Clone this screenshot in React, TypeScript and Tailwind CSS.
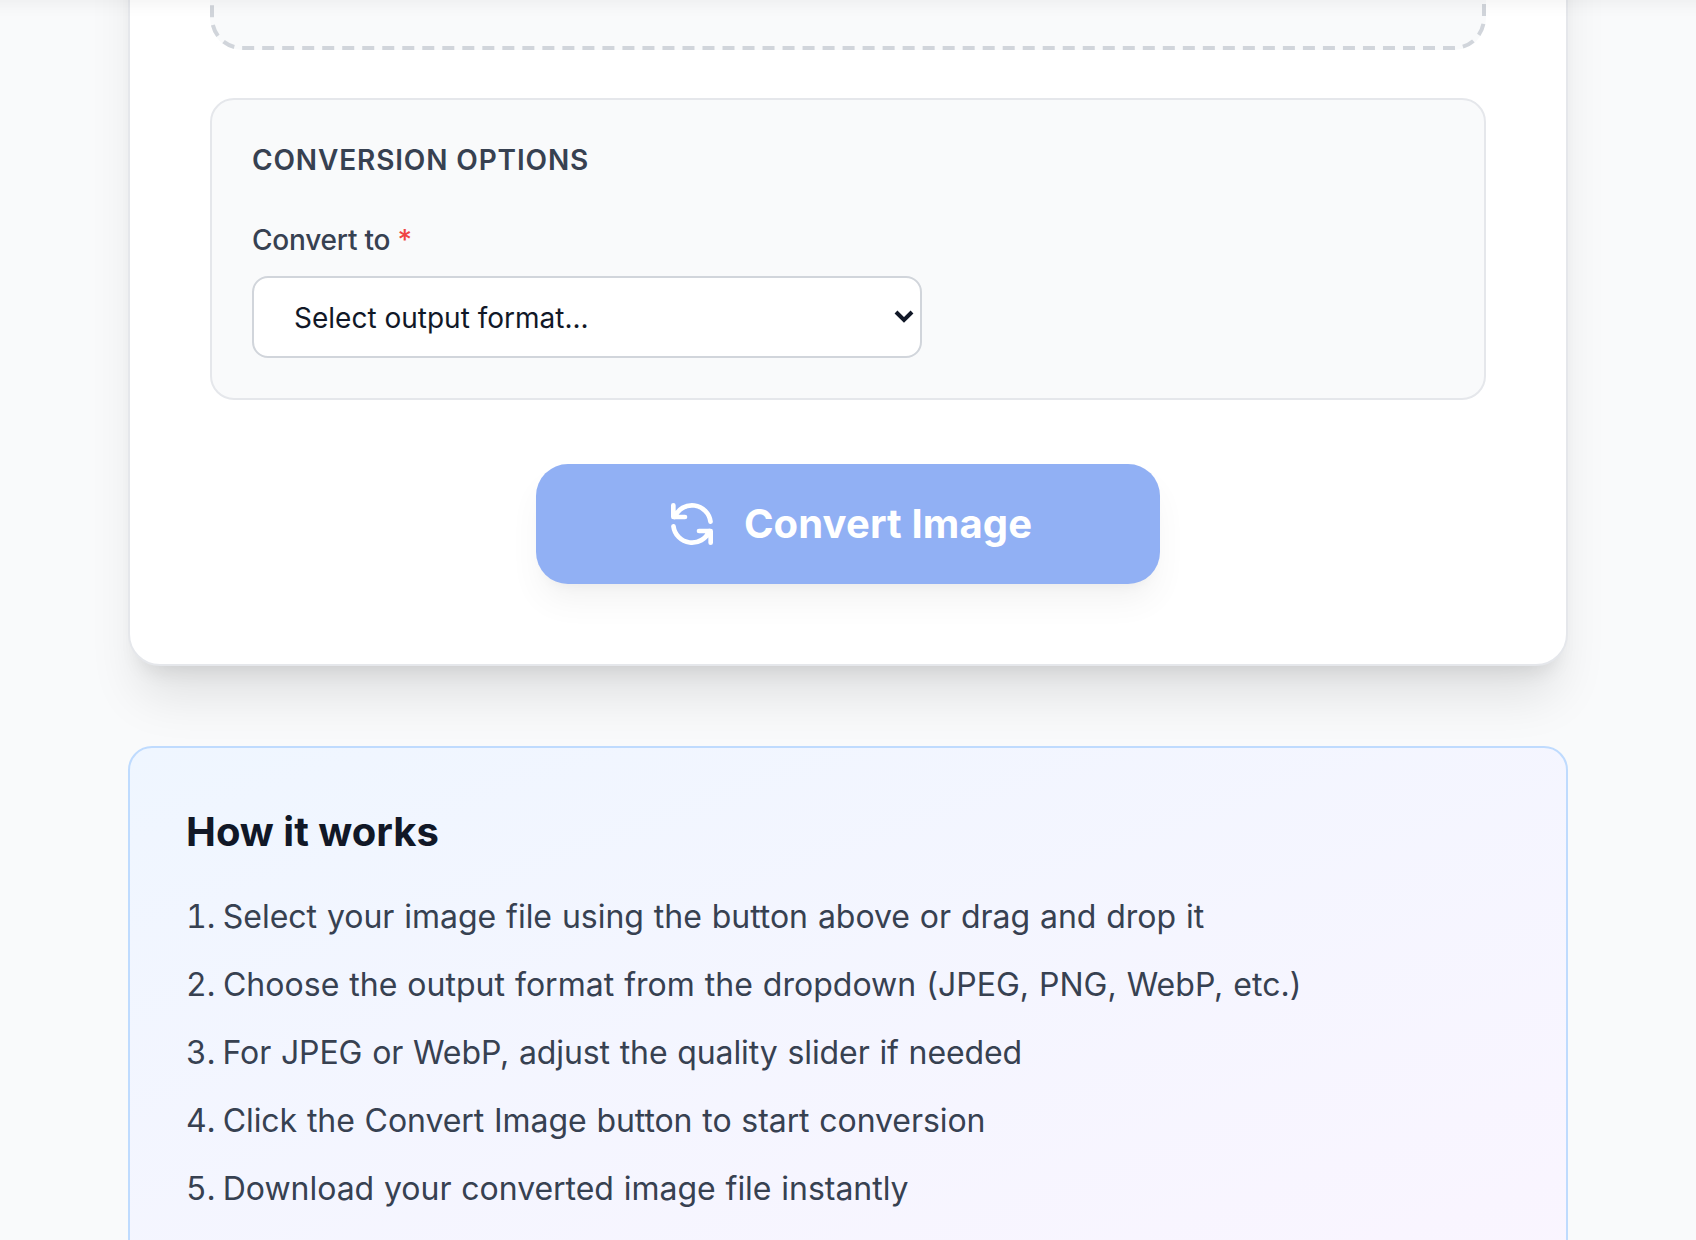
const steps = [
  {
    text: "Select your image file using the button above or drag and drop it",
    className: "tracking-[-0.009px]",
  },
  {
    text: "Choose the output format from the dropdown (JPEG, PNG, WebP, etc.)",
    className: "tracking-[0.014px]",
  },
  {
    text: "For JPEG or WebP, adjust the quality slider if needed",
    className: "tracking-[-0.048px]",
  },
  {
    text: "Click the Convert Image button to start conversion",
    className: "tracking-[-0.032px]",
  },
  {
    text: "Download your converted image file instantly",
    className: "tracking-[-0.014px]",
  },
];

export default function App() {
  return (
    <div className="h-[1240px] w-[1696px] overflow-hidden bg-[#f9fafb]">
      <div className="relative h-[620px] w-[848px] origin-top-left scale-200 overflow-hidden bg-[#f9fafb] font-['Inter',sans-serif] text-[#111827]">
        <header className="absolute -inset-x-4 -top-16 z-10 h-16 bg-white shadow-[0_2px_8px_0_rgba(0,0,0,0.05)]" />

        <main className="mx-auto w-[720px]">
          {/* Converter card */}
          <section className="-mt-[200px] rounded-2xl border border-[#e5e7eb] bg-white p-10 shadow-xl">
            <div className="relative h-[184px] rounded-2xl bg-[#f9fafb]">
              <DashedOutline />
            </div>

            <div className="mt-6 rounded-xl border border-[#e5e7eb] bg-[#f9fafb] p-5">
              <h3 className="text-sm font-semibold tracking-[0.43px] text-[#374151] uppercase">
                Conversion Options
              </h3>
              <label
                htmlFor="format"
                className="mt-5 block text-sm font-medium tracking-[-0.1px] text-[#374151]"
              >
                Convert to <span className="text-[#ef4444]">*</span>
              </label>
              <select
                id="format"
                className="mt-2 block h-[41px] w-[335px] rounded-lg border border-[#d1d5db] bg-white px-4 text-sm"
              >
                <option>Select output format...</option>
              </select>
            </div>

            <div className="mt-8 flex justify-center">
              <button
                disabled
                className="flex w-[312px] items-center justify-center gap-3 rounded-2xl bg-[#2563eb] py-4 text-xl font-bold tracking-[0.06px] text-white opacity-50 shadow-lg"
              >
                <RefreshIcon />
                Convert Image
              </button>
            </div>
          </section>

          {/* How it works */}
          <section className="mt-10 rounded-xl border border-[#bfdbfe] bg-[linear-gradient(to_bottom_right,#eff6ff,#faf5ff)] p-7">
            <h2 className="text-xl font-bold">How it works</h2>
            <ol className="mt-[15px] list-inside list-decimal space-y-2 text-base leading-relaxed text-[#374151] [word-spacing:0.45px]">
              {steps.map((step) => (
                <li key={step.text} className={step.className}>
                  <span className="-ml-px">{step.text}</span>
                </li>
              ))}
            </ol>
          </section>
        </main>
      </div>
    </div>
  );
}

function DashedOutline() {
  return (
    <svg
      className="absolute inset-0 h-full w-full"
      viewBox="0 0 638 184"
      fill="none"
      stroke="#d1d5db"
      strokeWidth="2"
      strokeDasharray="6 4.007"
    >
      <path d="M637 161v7a15 15 0 0 1-15 15H16a15 15 0 0 1-15-15V16A15 15 0 0 1 16 1h606a15 15 0 0 1 15 15v143" />
    </svg>
  );
}

function RefreshIcon() {
  return (
    <svg
      className="h-7 w-7"
      fill="none"
      stroke="currentColor"
      strokeWidth={2}
      strokeLinecap="round"
      strokeLinejoin="round"
      viewBox="0 0 24 24"
    >
      <path d="M4 4v5h.582m15.356 2A8.001 8.001 0 004.582 9m0 0H9m11 11v-5h-.581m0 0a8.003 8.003 0 01-15.357-2m15.357 2H15" />
    </svg>
  );
}
